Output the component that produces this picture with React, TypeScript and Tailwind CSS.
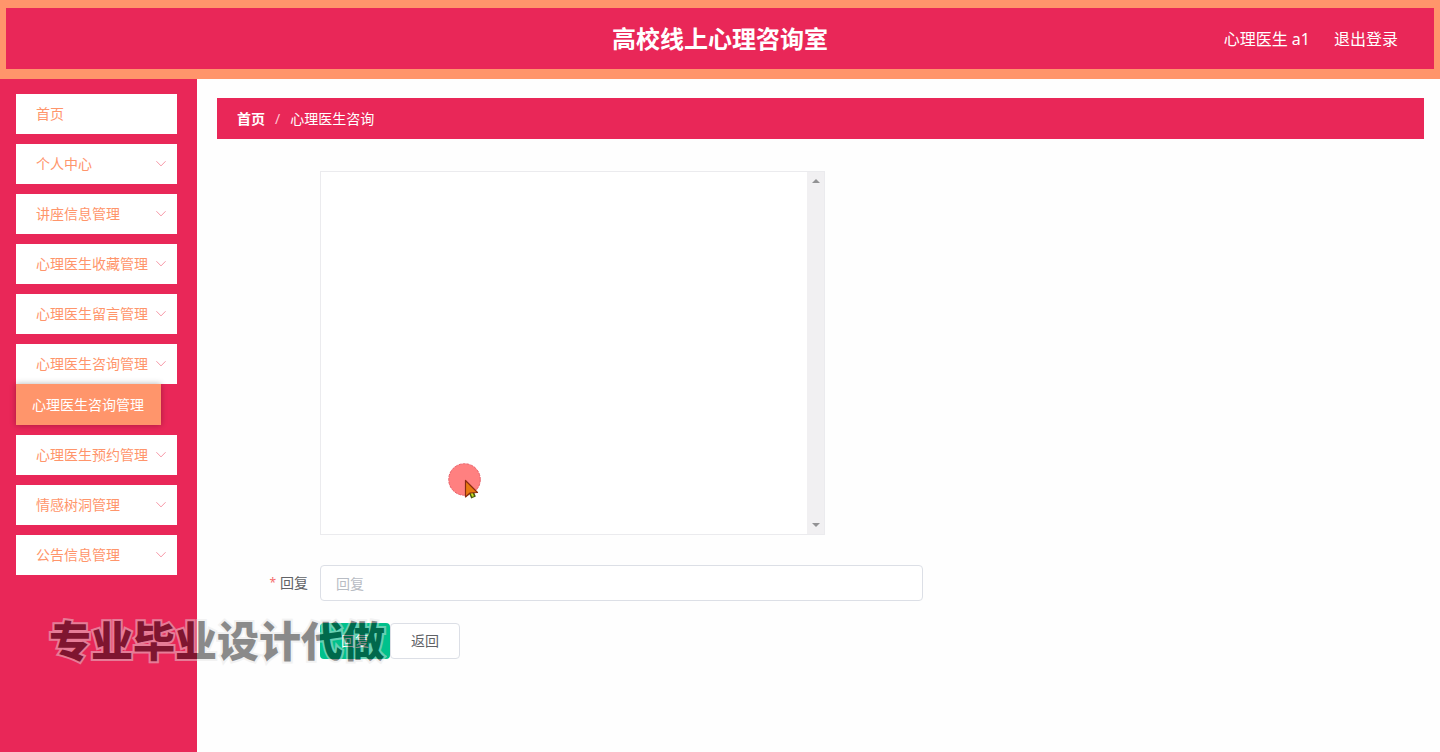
import type { FormEvent } from 'react';

type MenuEntry = { label: string; children?: string[] };

const menu: MenuEntry[] = [
  { label: '首页' },
  { label: '个人中心', children: [] },
  { label: '讲座信息管理', children: [] },
  { label: '心理医生收藏管理', children: [] },
  { label: '心理医生留言管理', children: [] },
  { label: '心理医生咨询管理', children: ['心理医生咨询管理'] },
  { label: '心理医生预约管理', children: [] },
  { label: '情感树洞管理', children: [] },
  { label: '公告信息管理', children: [] },
];

function Chevron() {
  return (
    <svg className="size-3 shrink-0" viewBox="0 0 12 12" fill="none" stroke="#f797a6" aria-hidden="true">
      <path d="M1.700 3.500 6 7.900 10.300 3.500" strokeWidth="1" strokeLinecap="round" strokeLinejoin="round" />
    </svg>
  );
}

function MenuItem({ entry }: { entry: MenuEntry }) {
  return (
    <li>
      <button
        type="button"
        className="flex h-10 w-full items-center justify-between bg-white pr-[10px] pl-5 text-[#ff956b]"
      >
        <span className="whitespace-nowrap">{entry.label}</span>
        {entry.children && <Chevron />}
      </button>
      {entry.children?.map((child) => (
        <a
          key={child}
          href="#consult"
          className="mr-4 flex h-[41px] items-center bg-[#ff956b] pl-4 whitespace-nowrap text-white shadow-[0_0_6px_rgba(0,0,0,0.3)]"
        >
          {child}
        </a>
      ))}
    </li>
  );
}

function Pointer() {
  return (
    <svg
      className="pointer-events-none absolute top-[291px] left-[127px] h-10 w-9"
      viewBox="0 0 36 40"
      aria-hidden="true"
    >
      <circle cx="16.500" cy="16.500" r="15.800" fill="#ff8080" stroke="#e8636c" strokeWidth="1" strokeDasharray="3 1" />
      <path d="M22.500 27 25.500 34.500" stroke="#4a5a10" strokeWidth="5" />
      <path d="M22.500 27 25 33.500" stroke="#c8e020" strokeWidth="2" />
      <path d="M17.500 17.500V34L22 30 29.500 29.500Z" fill="#e87a10" stroke="#8a2a10" strokeWidth="1.200" strokeLinejoin="round" />
    </svg>
  );
}

function ChatLog() {
  return (
    <div className="relative flex h-[364px] w-[505px] border border-[#ebebee] bg-white">
      <div className="flex-1" role="log" aria-label="咨询记录" />
      <div className="flex w-[17px] flex-col items-center justify-between bg-[#f1f0f2] py-[7px]" aria-hidden="true">
        <svg className="h-1 w-2" viewBox="0 0 8 4">
          <path d="M0 4 4 0 8 4Z" fill="#929294" />
        </svg>
        <svg className="h-1 w-2" viewBox="0 0 8 4">
          <path d="M0 0 4 4 8 0Z" fill="#929294" />
        </svg>
      </div>
      <Pointer />
    </div>
  );
}

export default function App() {
  return (
    <div className="relative flex min-h-screen flex-col bg-[#fefefe] font-['Noto_Sans','Noto_Sans_CJK_SC',sans-serif] text-sm">
      <header className="border-x-[6px] border-t-8 border-b-10 border-[#ff956b] bg-[#e92758] text-white">
        <div className="grid h-[61px] grid-cols-[1fr_auto_1fr] items-center">
          <h1 className="col-start-2 text-2xl font-bold">高校线上心理咨询室</h1>
          <div className="flex items-center justify-end gap-6 pr-9 text-base">
            <span>心理医生 a1</span>
            <a href="#logout">退出登录</a>
          </div>
        </div>
      </header>

      <div className="flex flex-1">
        <aside className="w-[197px] shrink-0 bg-[#e92758] pt-[15px] pr-5 pl-4">
          <nav>
            <ul className="flex flex-col gap-[10px]">
              {menu.map((entry) => (
                <MenuItem key={entry.label} entry={entry} />
              ))}
            </ul>
          </nav>
        </aside>

        <main className="flex-1 pt-[19px] pr-4 pl-5">
          <nav aria-label="面包屑" className="flex h-[41px] items-center bg-[#e92758] px-5 text-white">
            <a href="#home" className="font-bold">首页</a>
            <span className="px-[10px] text-[#ffc4d0]">/</span>
            <span>心理医生咨询</span>
          </nav>

          <form
            className="mt-8 grid grid-cols-[91px_1fr] gap-x-3"
            onSubmit={(e: FormEvent) => e.preventDefault()}
          >
            <div className="col-start-2">
              <ChatLog />
            </div>
            <label htmlFor="reply" className="mt-[30px] flex h-9 items-center justify-end gap-1 text-[#606266]">
              <span className="text-xs text-[#f56c6c]">*</span>
              回复
            </label>
            <input
              id="reply"
              type="text"
              placeholder="回复"
              className="mt-[30px] h-9 w-[603px] max-w-full rounded border border-[#dcdfe6] bg-white px-[15px] outline-none placeholder:text-[#b8bcc4]"
            />
            <div className="col-start-2 mt-[22px] flex">
              <button type="submit" className="h-9 w-[70px] rounded bg-[#00c18c] text-white">
                回复
              </button>
              <button
                type="button"
                className="h-9 w-[70px] rounded border border-[#dcdfe6] bg-white text-[#606266]"
              >
                返回
              </button>
            </div>
          </form>
        </main>
      </div>

      <div className="pointer-events-none absolute top-[611px] left-[49px] opacity-45">
        <span className="text-[42px] leading-[60px] font-black whitespace-nowrap text-black [-webkit-text-stroke:4px_#e4e4e4] [paint-order:stroke_fill]">
          专业毕业设计代做
        </span>
      </div>
    </div>
  );
}
